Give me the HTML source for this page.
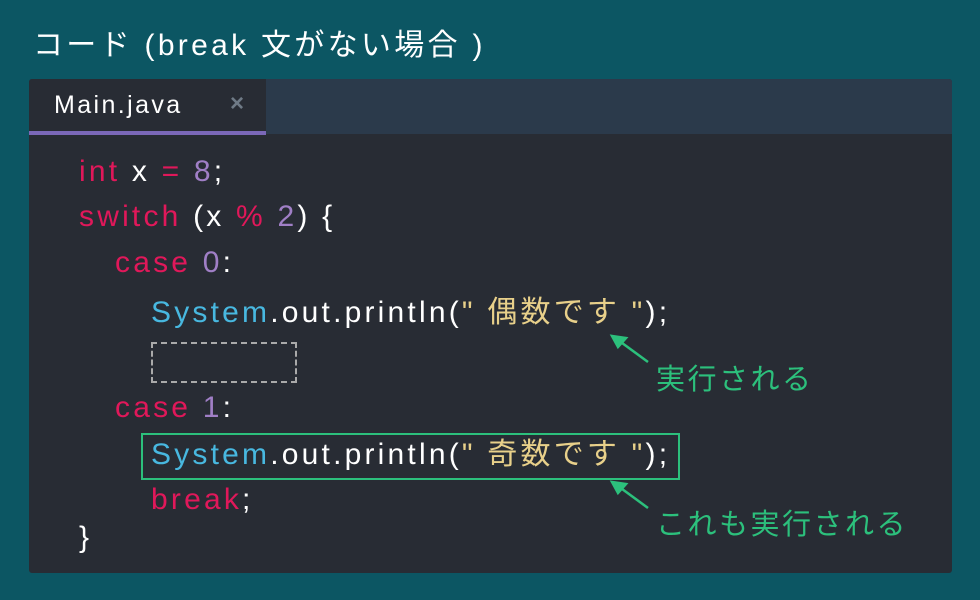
<!DOCTYPE html>
<html><head><meta charset="utf-8"><style>
html,body{margin:0;padding:0}
body{width:980px;height:600px;background:#0c5663;position:relative;overflow:hidden;font-family:"Liberation Sans","Noto Sans CJK JP",sans-serif;}
.title{position:absolute;left:33px;top:20px;color:#fff;font-size:30px;letter-spacing:3.3px;white-space:nowrap}
.panel{position:absolute;left:29px;top:79px;width:923px;height:494px;background:#282c34;border-radius:3px;overflow:hidden}
.strip{position:absolute;left:0;top:0;width:923px;height:55px;background:#2b3a4b}
.tab{position:absolute;left:0;top:0;width:237px;height:52px;background:#282c34;border-bottom:4px solid #7b68b8}
.tab .n{position:absolute;left:25px;top:12px;color:#fff;font-size:25px;letter-spacing:2.4px}
.tab .x{position:absolute;left:201px;top:11px;color:#6f7a86;font-size:24px;font-weight:bold}
.l{position:absolute;font-size:30px;color:#fff;white-space:nowrap;line-height:36px;letter-spacing:3.2px}
.k{color:#e0185a}.p{color:#a07fc6}.b{color:#48b8e0}.s{color:#e8d08a}.g{color:#2cc07c}
.ann{position:absolute;font-size:29px;color:#2cc07c;white-space:nowrap;letter-spacing:2.5px}
</style></head><body>
<div class="title">コード (break 文がない場合 )</div>
<div class="panel">
<div class="strip"></div>
<div class="tab"><span class="n">Main.java</span><span class="x">×</span></div>
</div>
<div class="l" style="left:79px;top:154px"><span class="k">int</span> x <span class="k">=</span> <span class="p">8</span>;</div>
<div class="l" style="left:79px;top:199px"><span class="k">switch</span> (x <span class="k">%</span> <span class="p">2</span>) {</div>
<div class="l" style="left:115px;top:245px"><span class="k">case</span> <span class="p">0</span>:</div>
<div class="l" style="left:151px;top:295px"><span class="b">System</span>.out.println(<span class="s">" 偶数です "</span>);</div>
<div style="position:absolute;left:151px;top:342px;width:142px;height:37px;border:2px dashed #aaa"></div>
<div class="l" style="left:115px;top:390px"><span class="k">case</span> <span class="p">1</span>:</div>
<div style="position:absolute;left:141px;top:433px;width:535px;height:43px;border:2px solid #2cc07c"></div>
<div class="l" style="left:151px;top:437px"><span class="b">System</span>.out.println(<span class="s">" 奇数です "</span>);</div>
<div class="l" style="left:151px;top:482px"><span class="k">break</span>;</div>
<div class="l" style="left:79px;top:520px">}</div>
<svg style="position:absolute;left:0;top:0" width="980" height="600">
<g stroke="#2cc07c" stroke-width="2.5" fill="#2cc07c">
<line x1="648" y1="362" x2="618" y2="340"/><polygon points="612,336 626,338 618,347" />
<line x1="648" y1="508" x2="618" y2="486"/><polygon points="612,482 626,484 618,493" />
</g></svg>
<div class="ann" style="left:656px;top:356px">実行される</div>
<div class="ann" style="left:656px;top:501px">これも実行される</div>
</body></html>
